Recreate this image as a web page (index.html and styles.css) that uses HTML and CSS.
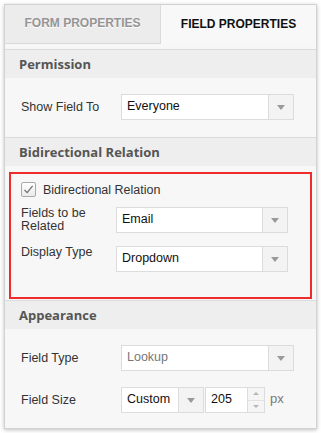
FILE: index.html
```html
<!doctype html>
<html lang="en">
    <head>
        <meta charset="UTF-8" />
        <meta name="viewport" content="width=device-width, initial-scale=1.0" />
        <title>Field Properties</title>
        <link rel="stylesheet" href="styles.css">
    </head>
    <body>
        <div class="panel">
            <div class="tabs">
                <div class="tab">FORM PROPERTIES</div>
                <div class="tab active">FIELD PROPERTIES</div>
            </div>

            <div class="content">
                <div class="section">
                    <div class="section-head">Permission</div>
                    <div class="section-body">
                        <div class="row">
                            <div class="label">Show Field To</div>
                            <div class="select">
                                <span class="value">Everyone</span>
                                <span class="arrow-btn"><i class="arrow"></i></span>
                            </div>
                        </div>
                    </div>
                </div>

                <div class="section">
                    <div class="section-head">Bidirectional Relation</div>
                    <div class="section-body relation">
                        <div class="highlight">
                            <div class="check-row">
                                <span class="checkbox">
                                    <svg width="11" height="11" viewBox="0 0 11 11">
                                        <path d="M1.5 6 L4.2 8.6 L9.6 1.8" fill="none" stroke="#6f6f6f" stroke-width="1.2" />
                                    </svg>
                                </span>
                                <span>Bidirectional Relation</span>
                            </div>
                            <div class="row top">
                                <div class="label">Fields to be Related</div>
                                <div class="select">
                                    <span class="value">Email</span>
                                    <span class="arrow-btn"><i class="arrow"></i></span>
                                </div>
                            </div>
                            <div class="row top">
                                <div class="label">Display Type</div>
                                <div class="select">
                                    <span class="value">Dropdown</span>
                                    <span class="arrow-btn"><i class="arrow"></i></span>
                                </div>
                            </div>
                        </div>
                    </div>
                </div>

                <div class="section">
                    <div class="section-head">Appearance</div>
                    <div class="section-body stack">
                        <div class="row">
                            <div class="label">Field Type</div>
                            <div class="select disabled">
                                <span class="value">Lookup</span>
                                <span class="arrow-btn"><i class="arrow"></i></span>
                            </div>
                        </div>
                        <div class="row">
                            <div class="label">Field Size</div>
                            <div class="size-group">
                                <div class="select small">
                                    <span class="value">Custom</span>
                                    <span class="arrow-btn"><i class="arrow"></i></span>
                                </div>
                                <div class="number">
                                    <span class="value">205</span>
                                    <span class="spinner">
                                        <span><i class="up"></i></span>
                                        <span><i class="down"></i></span>
                                    </span>
                                </div>
                                <span class="unit">px</span>
                            </div>
                        </div>
                    </div>
                </div>
            </div>
        </div>
    </body>
</html>
```

FILE: styles.css
```css
body {
    margin: 0;
    background: #fff;
    font-family: "Liberation Sans", Arial, sans-serif;
    font-size: 12.5px;
    color: #333;
}

.panel {
    width: 311px;
    margin: 4px;
    border: 1px solid #d2d2d2;
    background: #f7f7f7;
    box-shadow: 0 1px 4px rgba(0, 0, 0, 0.25);
}

.tabs {
    display: flex;
    height: 39px;
}

.tab {
    flex: 1;
    display: flex;
    align-items: center;
    justify-content: center;
    font-weight: 700;
    font-size: 12px;
    padding-bottom: 2px;
    box-sizing: border-box;
}

.tab:first-child {
    flex: 0 0 156px;
    background: #ececec;
    color: #959595;
    text-shadow: 0 1px 0 #fff;
    border-right: 1px solid #dadada;
    border-bottom: 1px solid #dadada;
}

.tab.active {
    color: #111;
    background: #f8f8f8;
}

.content {
    padding-top: 5px;
}

.section {
    border-top: 1px solid #dcdcdc;
}

.section-head {
    height: 28px;
    line-height: 28px;
    padding-left: 14px;
    background: #eeeeee;
    font-family: "Open Sans", sans-serif;
    font-weight: 700;
    font-size: 13px;
    color: #555;
}

.section-body {
    padding: 16px 22px 17px 16px;
}

.section-body.relation {
    padding: 6px 4px 1px 4px;
}

.section-body.stack {
    padding-bottom: 15px;
    display: flex;
    flex-direction: column;
    gap: 16px;
}

.highlight {
    border: 2px solid #ef2b2b;
    padding: 8px 22px 25px 10px;
}

.row {
    display: flex;
    align-items: center;
}

.row.top {
    align-items: flex-start;
}

.label {
    flex: 0 0 100px;
    line-height: 13px;
}

.highlight .label {
    flex-basis: 95px;
    padding-right: 14px;
    box-sizing: border-box;
}

.check-row {
    display: flex;
    align-items: center;
    gap: 7px;
    height: 15px;
    margin-bottom: 10px;
}

.check-row + .row {
    margin-bottom: 13px;
}

.checkbox {
    width: 13px;
    height: 13px;
    border: 1px solid #a9a9a9;
    border-radius: 2px;
    background: linear-gradient(#fdfdfd, #ececec);
    display: flex;
    align-items: center;
    justify-content: center;
}

.select {
    flex: 0 0 173px;
    height: 26px;
    box-sizing: border-box;
    display: flex;
    border: 1px solid #dcdcdc;
    background: #fff;
}

.highlight .select {
    flex-basis: 172px;
}

.select .value,
.number .value {
    flex: 1;
    padding-left: 5px;
    line-height: 23px;
    color: #111;
}

.select.disabled .value {
    color: #777;
}

.arrow-btn {
    width: 24px;
    border-left: 1px solid #dcdcdc;
    background: #f3f3f3;
    display: flex;
    align-items: center;
    justify-content: center;
}

.arrow {
    width: 0;
    height: 0;
    border-left: 4px solid transparent;
    border-right: 4px solid transparent;
    border-top: 5px solid #9a9a9a;
}

.size-group {
    display: flex;
    align-items: center;
}

.select.small {
    flex: 0 0 83px;
}

.number {
    width: 60px;
    height: 26px;
    box-sizing: border-box;
    margin-left: 1px;
    display: flex;
    border: 1px solid #dcdcdc;
    background: #fff;
}

.spinner {
    width: 16px;
    border-left: 1px solid #dcdcdc;
    background: #f5f5f5;
    display: flex;
    flex-direction: column;
}

.spinner span {
    flex: 1;
    display: flex;
    align-items: center;
    justify-content: center;
}

.spinner span + span {
    border-top: 1px solid #e2e2e2;
}

.up,
.down {
    width: 0;
    height: 0;
    border-left: 3px solid transparent;
    border-right: 3px solid transparent;
}

.up {
    border-bottom: 3px solid #b5b5b5;
}

.down {
    border-top: 3px solid #b5b5b5;
}

.unit {
    margin-left: 5px;
    margin-top: -4px;
    color: #777;
    font-size: 13px;
}
```
